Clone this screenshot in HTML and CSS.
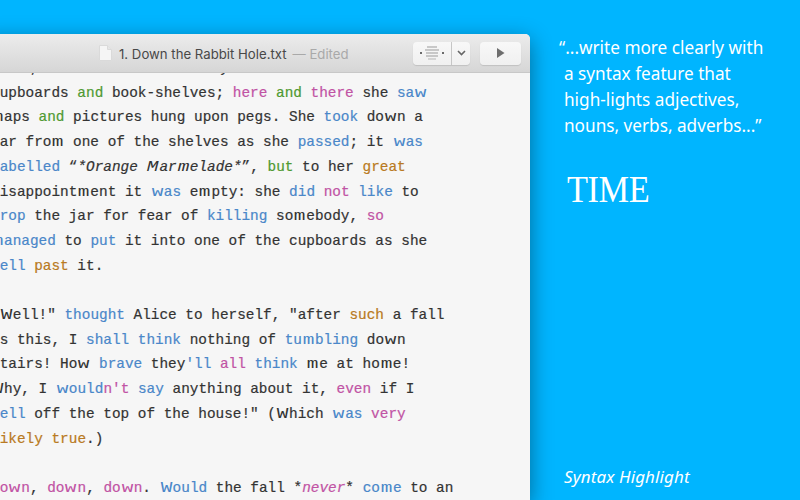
FILE: index.html
```html
<!DOCTYPE html>
<html lang="en">
<head>
  <meta charset="UTF-8" />
  <title>Syntax Highlight</title>
  <link rel="stylesheet" href="styles.css">
</head>
<body>
  <div class="window">
    <div class="titlebar">
      <svg class="doc-icon" width="13" height="16" viewBox="0 0 13 16">
        <path d="M0.5 0.5H8.5L12.5 4.5V15.5H0.5Z" fill="#f5f5f5" stroke="#dadada"/>
        <path d="M8.5 0.5V4.5H12.5" fill="#e6e6e6" stroke="#dadada"/>
      </svg>
      <span class="doc-name">1. Down the Rabbit Hole.txt</span>
      <span class="doc-state">— Edited</span>
      <div class="tools">
        <div class="btn-group">
          <div class="btn btn-outline">
            <svg width="24" height="14" viewBox="0 0 24 14">
              <g fill="none" stroke="#9b9b9b">
                <path d="M7 1H17"/>
                <path d="M5 4H19"/>
                <path d="M6 7H18"/>
                <path d="M6 10H18"/>
                <path d="M8 13H16" stroke="#b5b5b5"/>
              </g>
              <rect x="0" y="6" width="2" height="2" fill="#6a6a6a"/>
              <rect x="22" y="6" width="2" height="2" fill="#6a6a6a"/>
            </svg>
          </div>
          <div class="btn btn-arrow">
            <svg width="9" height="6" viewBox="0 0 9 6"><path d="M1 1L4.5 4.5L8 1" fill="none" stroke="#666" stroke-width="1.6"/></svg>
          </div>
        </div>
        <div class="btn btn-play">
          <svg width="9" height="10" viewBox="0 0 9 10"><path d="M1 0L8.5 5L1 10Z" fill="#6e6e6e"/></svg>
        </div>
      </div>
    </div>
    <div class="editor">
      <pre class="text" id="text">well, and noticed that they were filled with
cupboards <span class="green">and</span> book-shelves; <span class="pink">here</span> <span class="green">and</span> <span class="pink">there</span> she <span class="blue">saw</span>
maps <span class="green">and</span> pictures hung upon pegs. She <span class="blue">took</span> down a
jar from one of the shelves as she <span class="blue">passed</span>; it <span class="blue">was</span>
<span class="blue">labelled</span> “<em>*Orange Marmelade*</em>”, <span class="green">but</span> to her <span class="orange">great</span>
disappointment it <span class="blue">was</span> empty: she <span class="blue">did</span> <span class="pink">not</span> <span class="blue">like</span> to
<span class="blue">drop</span> the jar for fear of <span class="blue">killing</span> somebody, <span class="pink">so</span>
<span class="blue">managed</span> to <span class="blue">put</span> it into one of the cupboards as she
<span class="blue">fell</span> <span class="orange">past</span> it.

"Well!" <span class="blue">thought</span> Alice to herself, "after <span class="orange">such</span> a fall
as this, I <span class="blue">shall</span> <span class="blue">think</span> nothing of <span class="blue">tumbling</span> down
stairs! How <span class="blue">brave</span> they<span class="blue">'ll</span> <span class="pink">all</span> <span class="blue">think</span> me at home!
Why, I <span class="blue">would</span><span class="pink">n't</span> <span class="blue">say</span> anything about it, <span class="pink">even</span> if I
<span class="blue">fell</span> off the top of the house!" (Which <span class="blue">was</span> <span class="pink">very</span>
<span class="orange">likely</span> <span class="orange">true</span>.)

<span class="pink">Down</span>, <span class="pink">down</span>, <span class="pink">down</span>. <span class="blue">Would</span> the fall *<em class="pink">never</em>* <span class="blue">come</span> to an</pre>
    </div>
  </div>

  <div class="panel">
    <p class="quote">“...write more clearly with<br>a syntax feature that<br>high-lights adjectives,<br>nouns, verbs, adverbs...”</p>
    <div class="logo">TIME</div>
    <div class="caption">Syntax Highlight</div>
  </div>
  <script src="script.js"></script>
</body>
</html>
```

FILE: styles.css
```css
html, body {
  height: 100%;
}
body {
  margin: 0;
  display: flex;
  overflow: hidden;
  background: #00b5ff;
  color: #fff;
}

/* editor window, runs off the left edge and the bottom */
.window {
  flex: none;
  width: 550px;
  margin: 34px 0 0 -20px;
  display: flex;
  flex-direction: column;
  border-radius: 5px 5px 0 0;
  background: #f6f6f6;
  box-shadow: 0 6px 22px rgba(0, 0, 0, 0.42);
  overflow: hidden;
}
.titlebar {
  flex: none;
  position: relative;
  z-index: 1;
  height: 38px;
  display: flex;
  align-items: center;
  padding: 0 9px 0 119px;
  background: linear-gradient(to bottom, #ececec, #d6d6d6);
  border-bottom: 1px solid #c8c8c8;
  font-family: "Inter", "Liberation Sans", sans-serif;
  font-size: 13.2px;
  line-height: 18px;
}
.doc-icon {
  margin-right: 7px;
}
.doc-name {
  color: #484848;
  padding-top: 2px;
}
.doc-state {
  margin-left: 6px;
  padding-top: 2px;
  color: #a9a9a9;
}
.tools {
  margin-left: auto;
  display: flex;
  gap: 10px;
}
.btn-group {
  display: flex;
}
.btn {
  height: 23px;
  display: flex;
  align-items: center;
  justify-content: center;
  background: linear-gradient(to bottom, #f8f8f8, #f0f0f0);
  box-shadow: 0 1px 1px rgba(0, 0, 0, 0.12);
}
.btn-outline {
  width: 38px;
  border-radius: 4px 0 0 4px;
  border-right: 1px solid #c9c9c9;
}
.btn-arrow {
  width: 18px;
  border-radius: 0 4px 4px 0;
}
.btn-play {
  width: 41px;
  border-radius: 4px;
}

.editor {
  flex: 1;
  overflow: hidden;
}
.text {
  margin: -17px 0 0 11px;
  font-family: "Liberation Mono", monospace;
  font-size: 14.4px;
  line-height: 24.7px;
  color: #333;
  -webkit-text-stroke: 0.2px;
}
.text em {
  font-style: italic;
}
/* duospace font: m and w take one and a half cells */
.wide {
  display: inline-block;
  width: 13px;
  text-align: center;
  transform: scaleX(1.35);
  -webkit-text-stroke: 0;
}
.blue { color: #4a87c9; }
.pink { color: #c153a4; }
.green { color: #4f9a32; }
.orange { color: #b97a22; }

/* right side */
.panel {
  flex: 1;
  display: flex;
  flex-direction: column;
  padding: 35px 0 12px 34px;
  font-family: "Noto Sans", sans-serif;
}
.quote {
  margin: 0;
  font-size: 17.2px;
  line-height: 26px;
  text-indent: -5px;
}
.logo {
  margin: 30px 0 0 3px;
  font-family: "Liberation Serif", serif;
  font-size: 37px;
  line-height: 42px;
  letter-spacing: -0.5px;
  transform: scaleX(0.93);
  transform-origin: left;
}
.caption {
  margin-top: auto;
  font-size: 17px;
  font-style: italic;
  letter-spacing: 0.1px;
}
```

FILE: script.js
```js
// wrap every m and w so the mono font gets the wider duospace cells
function widenLetters(node) {
  for (const child of Array.from(node.childNodes)) {
    if (child.nodeType === 1) {
      widenLetters(child);
    } else if (child.nodeType === 3) {
      const frag = document.createDocumentFragment();
      for (const part of child.textContent.split(/([mwMW])/)) {
        if (/^[mwMW]$/.test(part)) {
          const letter = document.createElement('span');
          letter.className = 'wide';
          letter.textContent = part;
          frag.appendChild(letter);
        } else if (part) {
          frag.appendChild(document.createTextNode(part));
        }
      }
      child.replaceWith(frag);
    }
  }
}

widenLetters(document.getElementById('text'));
```
